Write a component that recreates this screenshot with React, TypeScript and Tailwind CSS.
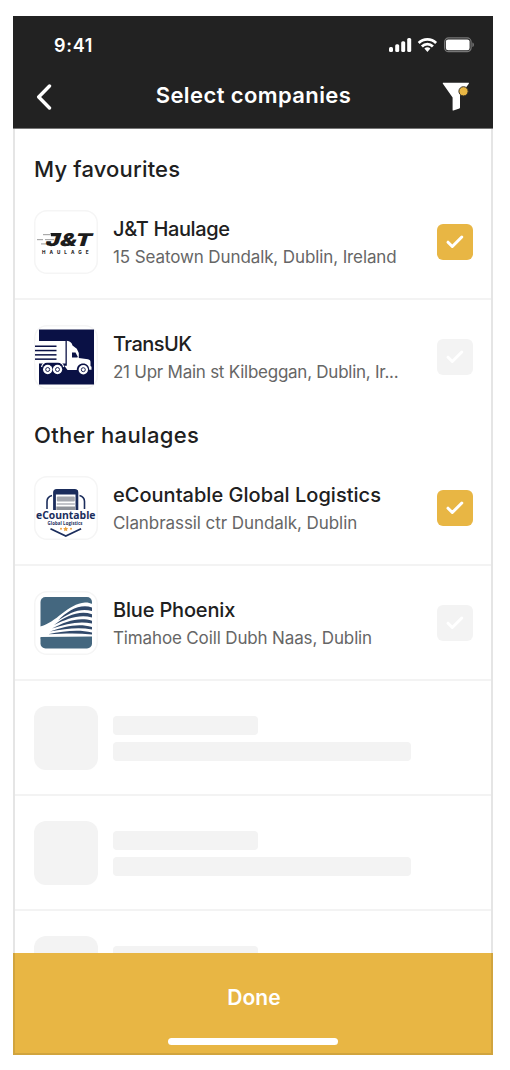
import type { ReactNode } from "react";

function StatusIcons() {
  return (
    <svg width="86" height="18" viewBox="0 0 86 18" fill="none">
      <g fill="#fff">
        <rect x="0" y="11" width="4" height="5" rx="1.500" />
        <rect x="6.200" y="8.300" width="4" height="7.700" rx="1.500" />
        <rect x="12.200" y="5.300" width="4" height="10.700" rx="1.500" />
        <rect x="18.200" y="2" width="4" height="14" rx="1.500" />
      </g>
      <g stroke="#fff" strokeWidth="2.800">
        <path d="M29.700 6.900a12.300 12.300 0 0 1 17.400 0" />
        <path d="M32.900 10.400a7.800 7.800 0 0 1 11 0" />
      </g>
      <path d="M35.400 12.600a4.200 4.200 0 0 1 6 0L38.400 16z" fill="#fff" />
      <rect x="55.600" y="1.900" width="26.500" height="13.800" rx="4" stroke="#777" strokeWidth="1.200" />
      <rect x="56.900" y="3.400" width="23.700" height="10.900" rx="2.200" fill="#fff" />
      <path d="M83.400 6.500v4.600c1-.3 1.500-1.200 1.500-2.300s-.5-2-1.500-2.300z" fill="#777" />
    </svg>
  );
}

function FunnelIcon() {
  return (
    <svg width="28" height="30" viewBox="0 0 28 30">
      <path
        d="M1.300 .8h25.200c.5 0 .6.500.3.900L18 13.500V25.500c0 .4-.2.700-.6.900l-6 2c-.5.200-.8 0-.8-.5V15.500L.9 1.800c-.3-.5-.1-1 .4-1z"
        fill="#fff"
      />
      <circle cx="21.500" cy="9.300" r="4.600" fill="#e8b644" stroke="#3a3428" strokeWidth="1" />
    </svg>
  );
}

function HaulageLogo() {
  return (
    <svg width="64" height="64" viewBox="0 0 64 64">
      <g fill="#aaa">
        <rect x="9" y="24" width="7" height="1.200" />
        <rect x="17" y="24" width="5" height="1.200" />
        <rect x="3" y="29" width="6" height="1.200" />
        <rect x="11" y="29" width="9" height="1.200" />
        <rect x="7" y="33.300" width="5" height="1.200" />
      </g>
      <g transform="translate(10.500 35.800) skewX(-17)">
        <text
          x="0"
          y="0"
          fontFamily="Inter, sans-serif"
          fontSize="17.500"
          fontWeight="900"
          fill="#1c1c1c"
          textLength="46"
          lengthAdjust="spacingAndGlyphs"
        >
          J&amp;T
        </text>
      </g>
      <path d="M16.500 23.100h11l-1 3.200h-9.500z" fill="#1c1c1c" />
      <text
        x="8"
        y="43.900"
        fontFamily="Inter, sans-serif"
        fontSize="4.600"
        fontWeight="800"
        fill="#2b2b2b"
        textLength="46.500"
      >
        HAULAGE
      </text>
    </svg>
  );
}

function TruckLogo() {
  return (
    <svg width="64" height="64" viewBox="0 0 64 64">
      <rect x="5" y="4.500" width="55" height="55" fill="#0a1145" />
      <path d="M1 16h30.500v22.500H1z" fill="#fff" />
      <g fill="#0a1145">
        <rect x="1" y="20.500" width="21.500" height="1.500" />
        <rect x="1" y="24.800" width="21.500" height="1.500" />
        <rect x="1" y="29.100" width="21.500" height="1.500" />
        <rect x="1" y="33.400" width="21.500" height="1.500" />
      </g>
      <path
        d="M32.800 15.800c3.200.6 5 2 5.700 4.600l4.300 3.400 2 4.200V33l9.200 1.200c1.800.4 2.500 1.300 2.500 3V41l1 .8v3h-2.300c0-3.800-2.500-6.200-6-6.200-3.700 0-6.200 2.400-6.400 6.400h-9.300l-3.200-4.200h2.500z"
        fill="#fff"
      />
      <path d="M38 27.500h3.500l2 3.700v1.200H38z" fill="#0a1145" />
      <path d="M7 44c0-3.800 2.700-6.500 6.700-6.500h9.600c3.800 0 6.500 2.500 6.700 6.500" fill="#0a1145" />
      <path d="M7.500 42c.8-3 3-5 6.200-5h9.600c3.400 0 5.700 2 6.400 5" stroke="#fff" strokeWidth="1.200" fill="none" />
      <g fill="#fff">
        <circle cx="13.700" cy="44.500" r="4.700" />
        <circle cx="23.500" cy="44.500" r="4.700" />
        <circle cx="49.300" cy="44.700" r="4.700" />
      </g>
      <g fill="none" stroke="#0a1145" strokeWidth="0.900">
        <circle cx="13.700" cy="44.500" r="2" />
        <circle cx="23.500" cy="44.500" r="2" />
        <circle cx="49.300" cy="44.700" r="2" />
      </g>
    </svg>
  );
}

function CountableLogo() {
  return (
    <svg width="64" height="64" viewBox="0 0 64 64" fill="none">
      <path d="M20.500 34V16.500c0-1.700.8-2.200 2.200-2.200h18c1.400 0 2.200.5 2.200 2.200V34" stroke="#1b2d5c" strokeWidth="2.800" />
      <path d="M20 14h23.500v4.500H20z" fill="#1b2d5c" />
      <path d="M13 33v-7.500c0-3.200 2-5.200 5-6M50.500 33v-7.500c0-3.200-2-5.200-5-6" stroke="#1b2d5c" strokeWidth="1.600" />
      <rect x="22.800" y="20.500" width="18" height="5" rx="1" fill="#a4a7ae" />
      <rect x="22.800" y="27" width="18" height="2" fill="#c3c5ca" />
      <rect x="22.300" y="30.500" width="19" height="3.500" fill="#8f939a" />
      <text
        x="2"
        y="43.200"
        fontFamily="Open Sans, sans-serif"
        fontSize="10.600"
        fontWeight="700"
        fill="#1b2d5c"
        textLength="59.500"
        lengthAdjust="spacingAndGlyphs"
      >
        eCountable
      </text>
      <text
        x="13.500"
        y="49"
        fontFamily="Open Sans, sans-serif"
        fontSize="4.300"
        fontWeight="700"
        fill="#1b2d5c"
        textLength="35"
      >
        Global Logistics
      </text>
      <g fill="#eda13b">
        <circle cx="27" cy="52.800" r="1" />
        <path d="m31.700 50.500.8 1.600 1.700.2-1.200 1.200.3 1.800-1.600-.9-1.600.9.300-1.800-1.200-1.200 1.700-.2z" />
        <circle cx="37" cy="52.800" r="1" />
      </g>
      <path d="m16.500 52.700 15.300 7.400 15.300-7.400" stroke="#1b2d5c" strokeWidth="1.800" />
    </svg>
  );
}

function PhoenixLogo() {
  return (
    <svg width="64" height="64" viewBox="0 0 64 64">
      <rect x="6.500" y="6" width="51.500" height="51.500" rx="5" fill="#44677f" />
      <path d="M6 35.500C22 32 34 12.500 51 11.500c3-.1 5 .5 7.500 1.500v34.500H6z" fill="#fff" />
      <g fill="#31496a">
        <path d="M24 29.500C34 19.500 46 12.500 58 16.500V20C46 16.500 35 22 24 29.500z" />
        <path d="M20 34C32 25 45 19 58 23.200V26.500C45 23 33 28 20 34z" />
        <path d="M18 37.500C31 30.500 45 25.500 58 29.700V32.500C45 29.500 32 33 18 37.500z" />
        <path d="M16 40.500C31 35.500 44 32 58 36V38.500C44 36 31 38 16 40.500z" />
        <path d="M14 43.300C30 40.200 44 38.300 58 41.500V43.500C44 42 30 42.500 14 43.300z" />
      </g>
      <path d="M6.500 46 58 45.500V48H6.500z" fill="#44677f" />
    </svg>
  );
}

function Checkbox({ checked }: { checked: boolean }) {
  return (
    <span
      role="checkbox"
      aria-checked={checked}
      className={`mt-[13.500px] flex size-9 shrink-0 items-center justify-center rounded-[6px] ${
        checked ? "bg-[#e8b644]" : "bg-[#f3f3f3]"
      }`}
    >
      <svg width="20" height="16" viewBox="0 0 20 16" fill="none">
        <path d="m3 8.200 4.300 4.300L16.800 3" stroke="#fff" strokeWidth="3" strokeLinecap="round" strokeLinejoin="round" />
      </svg>
    </span>
  );
}

interface CompanyProps {
  logo: ReactNode;
  name: string;
  nameClass: string;
  address: string;
  addressClass: string;
  checked?: boolean;
  divider?: boolean;
}

function Company({ logo, name, nameClass, address, addressClass, checked = false, divider = false }: CompanyProps) {
  return (
    <li className={`flex h-[115px] shrink-0 pt-[25px] pr-[20.500px] pl-[21px] ${divider ? "border-b-2 border-[#f3f3f3]" : ""}`}>
      <div className="size-16 shrink-0 overflow-hidden rounded-[13px] bg-white shadow-[inset_0_0_0_1.500px_#f5f5f5]">{logo}</div>
      <div className="min-w-0 flex-1 pt-[5px] pl-[15px] whitespace-nowrap">
        <div className={`text-[20px] leading-7 font-medium text-[#202020] ${nameClass}`}>{name}</div>
        <div className={`text-[17px] leading-[29px] text-[#666] ${addressClass}`}>{address}</div>
      </div>
      <Checkbox checked={checked} />
    </li>
  );
}

function Placeholder() {
  return (
    <li className="flex h-[115px] shrink-0 border-b-2 border-[#f3f3f3] pt-[25px] pl-[21px]">
      <div className="size-16 rounded-[12px] bg-[#f3f3f3]" />
      <div className="flex flex-col gap-[7px] pt-[10px] pl-[15px]">
        <div className="h-[19px] w-[145px] rounded-[4px] bg-[#f3f3f3]" />
        <div className="h-[19px] w-[298px] rounded-[4px] bg-[#f3f3f3]" />
      </div>
    </li>
  );
}

export default function App() {
  return (
    <div className="h-[1070px] w-[510px] bg-white pt-4 pl-[13px] font-['Inter',sans-serif]">
      <div className="flex h-[1039px] w-[480px] flex-col overflow-hidden bg-white">
        <header className="flex h-[113px] shrink-0 flex-col border-b border-[#777] bg-[#222] text-white">
          <div className="flex h-[58px] items-center justify-between pr-[18px] pl-[41px]">
            <span className="text-[18px] font-semibold tracking-[0.700px]">9:41</span>
            <StatusIcons />
          </div>
          <div className="grid h-[44px] grid-cols-[60px_1fr_60px] items-center">
            <svg className="ml-[22px]" width="18" height="28" viewBox="0 0 18 28" fill="none">
              <path d="M14.500 4 3.700 15l10.800 11" stroke="#fff" strokeWidth="3.400" strokeLinecap="round" strokeLinejoin="round" />
            </svg>
            <h1 className="pb-[2px] pl-[1px] text-center text-[22px] font-semibold tracking-[0.400px]">Select companies</h1>
            <div className="-ml-[3px] pt-[2px] pl-[12px]">
              <FunnelIcon />
            </div>
          </div>
        </header>
        <main className="flex min-h-0 flex-1 flex-col overflow-hidden border-x-2 border-[#e5e5e5]">
          <h2 className="h-[56px] shrink-0 pt-[24px] pl-[19px] text-[22px] leading-8 font-medium tracking-[0.170px] text-[#202020]">My favourites</h2>
          <ul className="-mx-[2px] shrink-0">
            <Company divider checked logo={<HaulageLogo />} name="J&T Haulage" nameClass="tracking-[-0.360px]" address="15 Seatown Dundalk, Dublin, Ireland" addressClass="tracking-[-0.110px]" />
            <Company logo={<TruckLogo />} name="TransUK" nameClass="tracking-[-0.550px]" address="21 Upr Main st Kilbeggan, Dublin, Ir..." addressClass="tracking-[-0.250px]" />
          </ul>
          <h2 className="h-[36px] shrink-0 pt-[4px] pl-[19px] text-[22px] leading-8 font-medium tracking-[0.350px] text-[#202020]">Other haulages</h2>
          <ul className="-mx-[2px] shrink-0">
            <Company divider checked logo={<CountableLogo />} name="eCountable Global Logistics" nameClass="tracking-[0.020px]" address="Clanbrassil ctr Dundalk, Dublin" addressClass="tracking-[-0.070px]" />
            <Company divider logo={<PhoenixLogo />} name="Blue Phoenix" nameClass="tracking-[-0.170px]" address="Timahoe Coill Dubh Naas, Dublin" addressClass="tracking-[-0.140px]" />
            <Placeholder />
            <Placeholder />
            <Placeholder />
          </ul>
        </main>
        <button className="flex h-[102px] shrink-0 flex-col items-center border-2 border-t-0 border-[#d1a43e] bg-[#e8b644] pt-[29px] text-white">
          <span className="pl-[2px] text-[21px] leading-8 font-semibold tracking-[0.100px]">Done</span>
          <span className="mt-[24px] h-[7px] w-[170px] rounded-full bg-white" />
        </button>
      </div>
    </div>
  );
}
